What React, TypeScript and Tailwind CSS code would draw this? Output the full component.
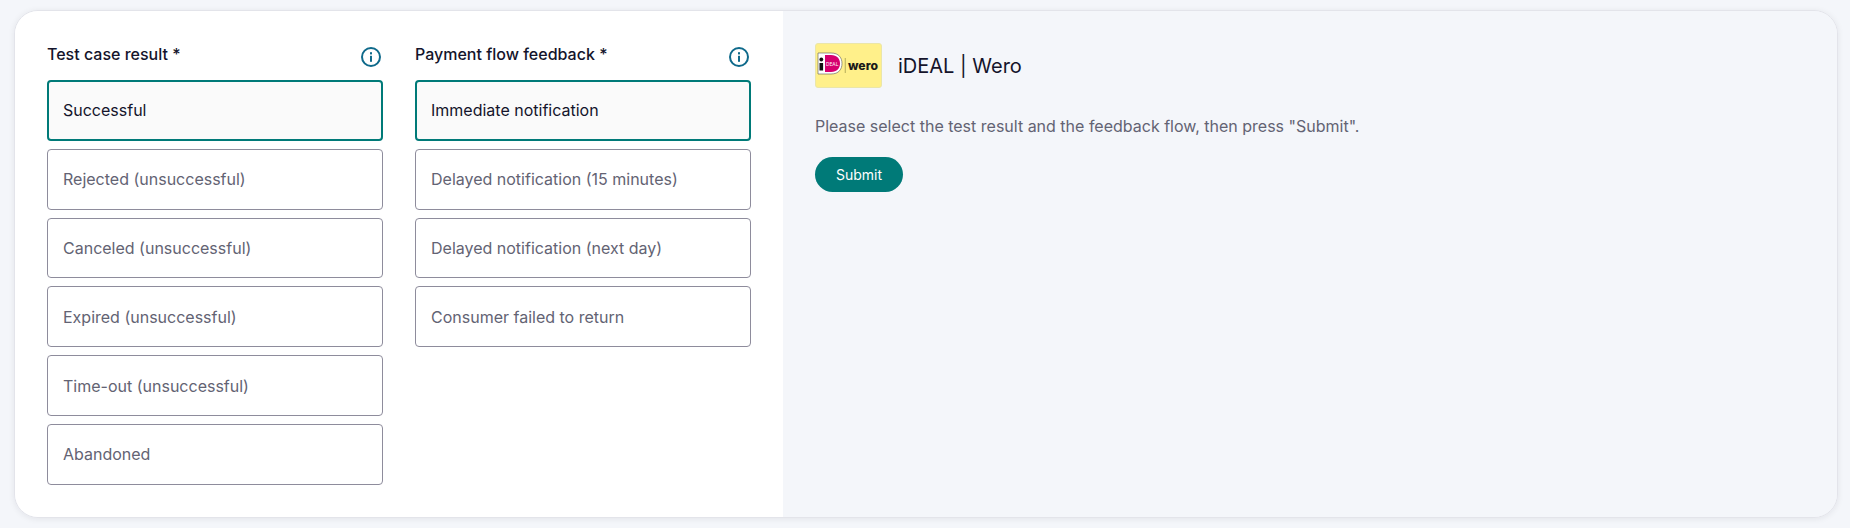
const results = [
  "Successful",
  "Rejected (unsuccessful)",
  "Canceled (unsuccessful)",
  "Expired (unsuccessful)",
  "Time-out (unsuccessful)",
  "Abandoned",
];

const flows = [
  "Immediate notification",
  "Delayed notification (15 minutes)",
  "Delayed notification (next day)",
  "Consumer failed to return",
];

function InfoIcon() {
  return (
    <svg width="20" height="20" viewBox="0 0 20 20" fill="none" className="shrink-0">
      <circle cx="10" cy="10" r="9" stroke="#0f6a8b" strokeWidth="2" />
      <rect x="9" y="8.800" width="2" height="6" fill="#0f6a8b" />
      <rect x="9" y="5.200" width="2" height="2.200" fill="#0f6a8b" />
    </svg>
  );
}

function Logo() {
  return (
    <div className="h-[45px] w-[67px] rounded-[3px] border border-[#ebe6a8] bg-[#fff08a]">
      <svg width="65" height="43" viewBox="0 0 65 43" className="block">
        <path d="M2 9h13c8 0 11 5 11 10.500s-3 10.500-11 10.500H2z" fill="#fff" stroke="#555" strokeWidth="0.6" />
        <path d="M9 11h6c6 0 9 4 9 8.500s-3 8.500-9 8.500H9z" fill="#d6006e" />
        <rect x="3.500" y="19" width="3.600" height="7.500" fill="#111" />
        <circle cx="5.300" cy="15.500" r="1.900" fill="#111" />
        <text x="10" y="21.500" fontSize="4.800" fill="#fff" fontFamily="Inter, sans-serif">DEAL</text>
        <rect x="28.800" y="14" width="0.800" height="15" fill="#a39c50" />
        <text x="32" y="25.500" fontSize="12" fontWeight="800" fill="#1a1a1a" fontFamily="Inter, sans-serif" textLength="30" lengthAdjust="spacingAndGlyphs">wero</text>
      </svg>
    </div>
  );
}

function OptionColumn({ title, options }: { title: string; options: string[] }) {
  return (
    <div className="w-[336px]">
      <div className="flex h-[37px] items-start justify-between pr-[2px]">
        <span className="mt-[-1px] text-base leading-6 font-medium text-[#14142b]">{title} *</span>
        <span className="mt-[4px]">
          <InfoIcon />
        </span>
      </div>
      <div className="flex flex-col gap-2">
        {options.map((o, i) => (
          <button
            key={o}
            className={
              i === 0
                ? "h-[60.8px] rounded-[4px] border-2 border-[#007a78] bg-[#fafafa] pl-[14px] text-left text-base text-[#14142b]"
                : "h-[60.8px] rounded-[4px] border border-[#8e8c9c] bg-white pl-[15px] text-left text-base text-[#636373]"
            }
          >
            {o}
          </button>
        ))}
      </div>
    </div>
  );
}

export default function App() {
  return (
    <div className="h-[528px] bg-[#f4f6fa] pl-[14px] pr-[12px] pt-[10px] font-['Inter',sans-serif]">
      <div className="flex h-[508px] overflow-hidden rounded-[24px] border border-[#e3e4ea] shadow-[0_1px_6px_rgba(20,20,43,0.08)]">
        <div className="flex w-[768px] shrink-0 gap-8 bg-white pl-8 pt-8">
          <OptionColumn title="Test case result" options={results} />
          <OptionColumn title="Payment flow feedback" options={flows} />
        </div>
        <div className="flex-1 bg-[#f4f6fa] pl-8 pt-8">
          <div className="flex items-center gap-4">
            <Logo />
            <h2 className="text-[20px] font-normal text-[#14142b]">iDEAL | Wero</h2>
          </div>
          <p className="mt-[26px] text-base leading-6 text-[#636373]">
            Please select the test result and the feedback flow, then press "Submit".
          </p>
          <button className="mt-[19px] h-[35px] w-[88px] rounded-full bg-[#007a78] text-[14px] text-white">
            Submit
          </button>
        </div>
      </div>
    </div>
  );
}
